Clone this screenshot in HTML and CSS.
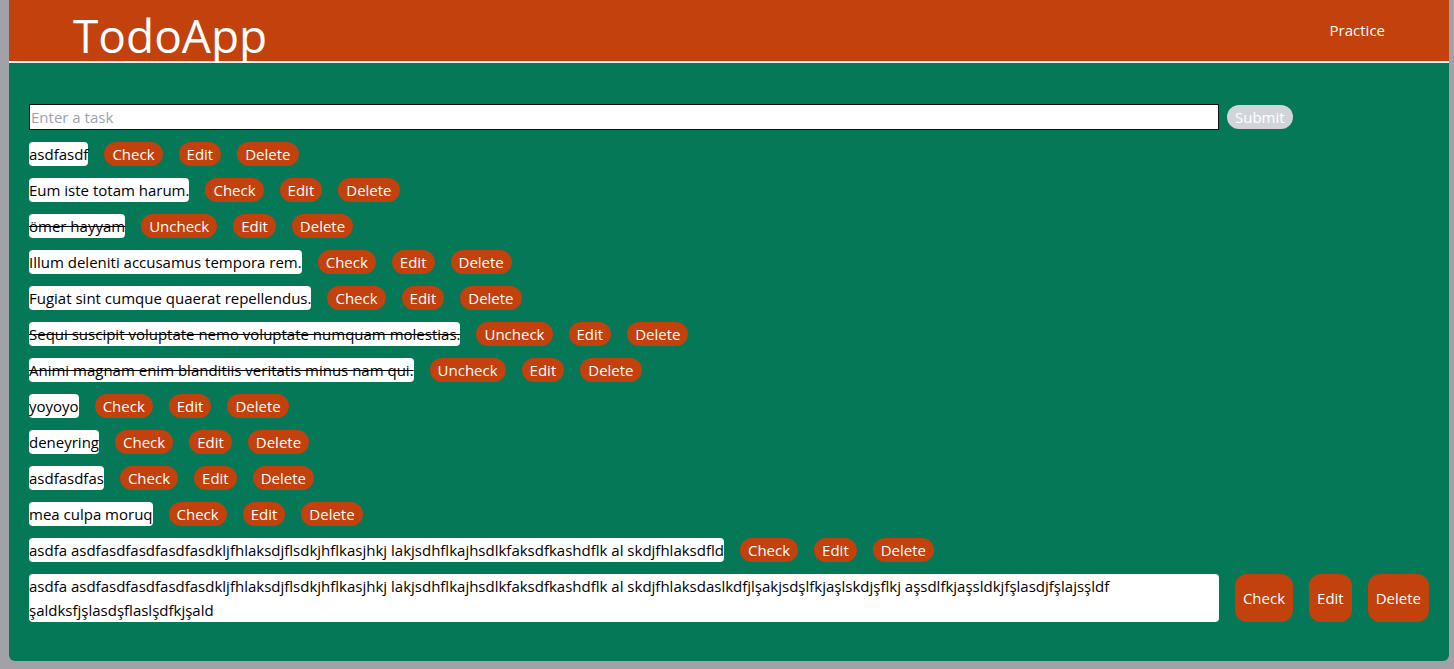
FILE: index.html
```html
<!DOCTYPE html>
<html lang="en">
<head>
<meta charset="utf-8">
<title>TodoApp</title>
<link rel="stylesheet" href="styles.css">
</head>
<body>
<div class="app">
  <header class="topbar">
    <h1 class="brand">TodoApp</h1>
    <nav class="nav"><a class="nav-link" href="#">Practice</a></nav>
  </header>
  <main class="board">
    <form class="task-form">
      <input class="task-input" type="text" placeholder="Enter a task">
      <button class="submit" type="button">Submit</button>
    </form>
    <ul class="tasks">
      <li class="task"><span class="task-text">asdfasdf</span><button class="btn">Check</button><button class="btn">Edit</button><button class="btn">Delete</button></li>
      <li class="task"><span class="task-text">Eum iste totam harum.</span><button class="btn">Check</button><button class="btn">Edit</button><button class="btn">Delete</button></li>
      <li class="task"><span class="task-text done">ömer hayyam</span><button class="btn">Uncheck</button><button class="btn">Edit</button><button class="btn">Delete</button></li>
      <li class="task"><span class="task-text">Illum deleniti accusamus tempora rem.</span><button class="btn">Check</button><button class="btn">Edit</button><button class="btn">Delete</button></li>
      <li class="task"><span class="task-text">Fugiat sint cumque quaerat repellendus.</span><button class="btn">Check</button><button class="btn">Edit</button><button class="btn">Delete</button></li>
      <li class="task"><span class="task-text done">Sequi suscipit voluptate nemo voluptate numquam molestias.</span><button class="btn">Uncheck</button><button class="btn">Edit</button><button class="btn">Delete</button></li>
      <li class="task"><span class="task-text done">Animi magnam enim blanditiis veritatis minus nam qui.</span><button class="btn">Uncheck</button><button class="btn">Edit</button><button class="btn">Delete</button></li>
      <li class="task"><span class="task-text">yoyoyo</span><button class="btn">Check</button><button class="btn">Edit</button><button class="btn">Delete</button></li>
      <li class="task"><span class="task-text">deneyring</span><button class="btn">Check</button><button class="btn">Edit</button><button class="btn">Delete</button></li>
      <li class="task"><span class="task-text">asdfasdfas</span><button class="btn">Check</button><button class="btn">Edit</button><button class="btn">Delete</button></li>
      <li class="task"><span class="task-text">mea culpa moruq</span><button class="btn">Check</button><button class="btn">Edit</button><button class="btn">Delete</button></li>
      <li class="task"><span class="task-text">asdfa asdfasdfasdfasdfasdkljfhlaksdjflsdkjhflkasjhkj lakjsdhflkajhsdlkfaksdfkashdflk al skdjfhlaksdfld</span><button class="btn">Check</button><button class="btn">Edit</button><button class="btn">Delete</button></li>
      <li class="task"><span class="task-text">asdfa asdfasdfasdfasdfasdkljfhlaksdjflsdkjhflkasjhkj lakjsdhflkajhsdlkfaksdfkashdflk al skdjfhlaksdaslkdfjlşakjsdşlfkjaşlskdjşflkj aşsdlfkjaşsldkjfşlasdjfşlajsşldf şaldksfjşlasdşflaslşdfkjşald</span><button class="btn">Check</button><button class="btn">Edit</button><button class="btn">Delete</button></li>
    </ul>
  </main>
</div>
</body>
</html>
```
FILE: styles.css
```css
* { box-sizing: border-box; }
html, body { margin: 0; padding: 0; }
body {
  background: #a1a1aa;
  font-family: "Open Sans", "Noto Sans", sans-serif;
  font-size: 15px;
  line-height: 24px;
  color: #000;
}
.app {
  margin: 0 5px 8px 9px;
  min-height: 661px;
  display: flex;
  flex-direction: column;
}
.topbar {
  height: 63px;
  background: #c2410c;
  border-bottom: 2px solid #f3f4f6;
  display: flex;
  justify-content: space-between;
  align-items: center;
  padding: 0 64px;
}
.brand {
  margin: 0;
  font-weight: 400;
  font-size: 46px;
  line-height: 48px;
  color: #fff;
  padding-top: 8px;
}
.nav-link {
  display: block;
  color: #fff;
  text-decoration: none;
  font-size: 15px;
  margin-top: -2px;
}
.board {
  flex: 1;
  background: #047857;
  border-radius: 0 0 6px 6px;
  padding: 41px 20px 39px;
}
.task-form {
  display: flex;
  gap: 8px;
  align-items: center;
  margin: 0 0 12px;
}
.task-input {
  width: 1190px;
  height: 26px;
  border: 1px solid #111;
  padding: 0 1px;
  font: inherit;
  outline: none;
}
.task-input::placeholder { color: #9ca3af; }
.submit {
  background: #d1d5db;
  color: #fff;
  border: 0;
  border-radius: 12px;
  height: 24px;
  padding: 0 8px;
  font: inherit;
}
.tasks {
  list-style: none;
  margin: 0;
  padding: 0;
  display: flex;
  flex-direction: column;
  gap: 12px;
}
.task {
  display: flex;
  gap: 16px;
  align-items: stretch;
}
.task-text {
  background: #fff;
  border-radius: 4px;
}
.task-text.done { text-decoration: line-through; }
.btn {
  flex: none;
  background: #c2410c;
  color: #fff;
  border: 0;
  border-radius: 12px;
  padding: 0 8px;
  font: inherit;
  min-height: 24px;
}
```
